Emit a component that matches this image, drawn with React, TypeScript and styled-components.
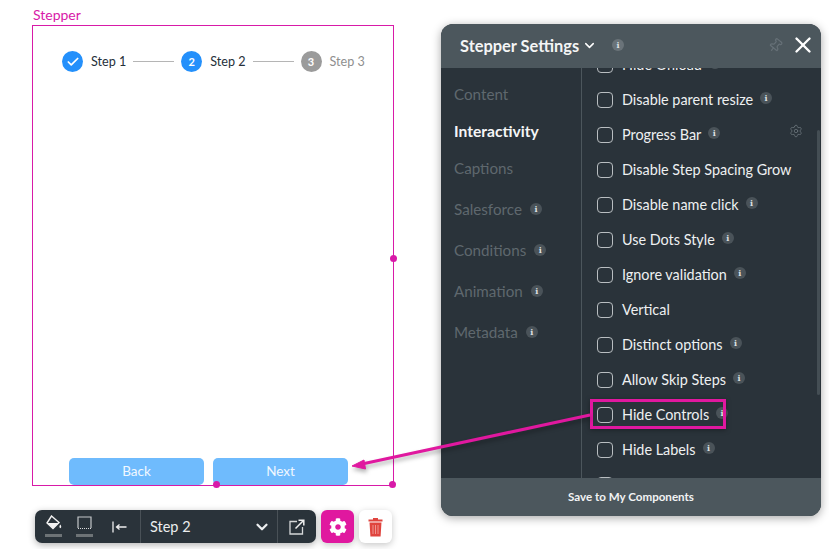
import React from "react";
import styled, { createGlobalStyle } from "styled-components";
import { Check, ChevronDown, X, Settings, Pin } from "lucide-react";
import { FaCog } from "react-icons/fa";

const Global = createGlobalStyle`
  html, body { margin: 0; padding: 0; background: #fff; }
  body { font-family: Lato, "Liberation Sans", sans-serif; }
`;

const Page = styled.div`
  position: relative;
  width: 829px;
  height: 549px;
  overflow: hidden;
  display: flex;
  background: #fff;
`;

const Stage = styled.div`
  width: 441px;
  flex: none;
  padding: 7px 0 0 32px;
  box-sizing: border-box;
  display: flex;
  flex-direction: column;
`;

const FrameLabel = styled.div`
  font-size: 14px;
  line-height: 16px;
  height: 18px;
  margin-left: 1px;
  color: #d81aa8;
`;

const Frame = styled.div`
  position: relative;
  width: 362px;
  height: 461px;
  box-sizing: border-box;
  border: 1px solid #d81aa8;
  display: flex;
  flex-direction: column;
  justify-content: space-between;
`;

const Steps = styled.div`
  display: flex;
  align-items: center;
  padding: 25px 0 0 29px;
`;

const Circle = styled.div<{ $c: string }>`
  width: 21px;
  height: 21px;
  flex: none;
  border-radius: 50%;
  background: ${(p) => p.$c};
  color: #fff;
  display: flex;
  align-items: center;
  justify-content: center;
  font-size: 11px;
  font-weight: 700;
`;

const StepName = styled.span<{ $muted?: boolean }>`
  margin-left: 8px;
  font-size: 12.6px;
  line-height: 21px;
  color: ${(p) => (p.$muted ? "#8f8f8f" : "#26303a")};
`;

const StepLine = styled.div<{ $w: number }>`
  width: ${(p) => p.$w}px;
  height: 1px;
  margin: 0 7px;
  background: #b5b5b5;
`;

const Buttons = styled.div`
  display: flex;
  gap: 9px;
  padding-left: 36px;
`;

const Btn = styled.div`
  width: 135px;
  height: 27px;
  border-radius: 5px;
  background: #6fbbfd;
  color: #f1f8ff;
  font-size: 13.5px;
  line-height: 27px;
  text-align: center;
`;

const Handle = styled.span<{ $x: number; $y: number }>`
  position: absolute;
  left: ${(p) => p.$x}px;
  top: ${(p) => p.$y}px;
  width: 7px;
  height: 7px;
  border-radius: 50%;
  background: #d81aa8;
`;

const ToolRow = styled.div`
  display: flex;
  align-items: center;
  margin: 24px 0 0 3px;
`;

const Toolbar = styled.div`
  width: 281px;
  height: 33px;
  border-radius: 7px;
  background: #2a333a;
  display: flex;
  align-items: stretch;
  box-shadow: 0 2px 7px rgba(0, 0, 0, 0.3);
  color: #f2f2f2;
`;

const ToolIcons = styled.div`
  width: 105px;
  flex: none;
  display: flex;
  align-items: center;
  padding-left: 9px;
  box-sizing: border-box;
  gap: 12px;
`;

const ToolIcon = styled.div<{ $shift?: number }>`
  width: 19px;
  height: 33px;
  margin-left: ${(p) => p.$shift ?? 0}px;
  display: flex;
  flex-direction: column;
  align-items: center;
  justify-content: center;
  position: relative;
`;

const Swatch = styled.span`
  position: absolute;
  left: 1px;
  bottom: 6px;
  width: 17px;
  height: 3px;
  background: #6d7376;
`;

const ToolSelect = styled.div`
  flex: 1;
  border-left: 1px solid #495157;
  border-right: 1px solid #495157;
  display: flex;
  align-items: center;
  justify-content: space-between;
  padding: 0 6px 0 9px;
  font-size: 14.5px;
  color: #eceeef;
`;

const ToolEnd = styled.div`
  width: 38px;
  flex: none;
  display: flex;
  align-items: center;
  justify-content: center;
`;

const SquareBtn = styled.div<{ $bg: string; $c: string }>`
  width: 33px;
  height: 33px;
  margin-left: 5px;
  border-radius: 6px;
  background: ${(p) => p.$bg};
  color: ${(p) => p.$c};
  display: flex;
  align-items: center;
  justify-content: center;
  box-shadow: 0 2px 7px rgba(0, 0, 0, 0.22);
`;

const Panel = styled.div`
  margin-top: 24px;
  width: 380px;
  height: 492px;
  border-radius: 12px;
  background: #2a333a;
  box-shadow: 0 2px 10px rgba(0, 0, 0, 0.35);
  display: flex;
  flex-direction: column;
  overflow: hidden;
  flex: none;
`;

const Header = styled.div`
  height: 44px;
  flex: none;
  background: #4c575d;
  display: flex;
  align-items: center;
  padding: 0 5px 2px 19px;
  box-sizing: border-box;
  color: #fff;
`;

const Title = styled.span`
  font-size: 16.4px;
  font-weight: 700;
  color: #f4f5f5;
`;

const HeaderSpacer = styled.div`
  flex: 1;
`;

const Info = styled.span<{ $dim?: boolean }>`
  display: inline-flex;
  align-items: center;
  justify-content: center;
  width: 12px;
  height: 12px;
  flex: none;
  border-radius: 50%;
  background: ${(p) => (p.$dim ? "#4a5359" : "#6a7379")};
  color: #dfe2e4;
  font-family: "DejaVu Serif", serif;
  font-size: 8px;
  font-weight: 700;
  line-height: 12px;
`;

const Body = styled.div`
  flex: 1;
  display: flex;
  min-height: 0;
  position: relative;
`;

const Nav = styled.div`
  width: 141px;
  flex: none;
  box-sizing: border-box;
  border-right: 1px solid #4c565c;
  padding: 7px 0 0 13px;
  display: flex;
  flex-direction: column;
`;

const NavGroup = styled.div<{ $h: number; $top?: number }>`
  margin-top: ${(p) => p.$top ?? 0}px;
  display: grid;
  grid-auto-rows: ${(p) => p.$h}px;
`;

const NavItem = styled.div<{ $active?: boolean }>`
  display: flex;
  align-items: center;
  gap: 8px;
  font-size: ${(p) => (p.$active ? 15.6 : 15.2)}px;
  font-weight: ${(p) => (p.$active ? 700 : 400)};
  color: ${(p) => (p.$active ? "#f5f6f6" : "#5f686e")};
`;

const List = styled.div`
  flex: 1;
  overflow: hidden;
`;

const ListInner = styled.div`
  margin-top: -21px;
  padding-left: 15px;
`;

const Row = styled.div<{ $mark?: boolean }>`
  position: relative;
  height: 35px;
  display: flex;
  align-items: center;
  color: #eef0f1;
  font-size: 14.4px;
  ${(p) =>
    p.$mark &&
    `&::after {
      content: "";
      position: absolute;
      left: -7px;
      top: 2px;
      width: 136px;
      height: 30px;
      box-sizing: border-box;
      border: 3px solid #e0189f;
      box-shadow: 0 1px 5px rgba(0, 0, 0, 0.35);
    }`}
`;

const Box = styled.span`
  width: 14px;
  height: 14px;
  flex: none;
  border: 1px solid #b9bec1;
  border-radius: 4px;
  margin-right: 9px;
`;

const RowInfo = styled(Info)`
  margin: -3px 0 0 7px;
`;

const Gear = styled.span`
  position: absolute;
  left: 192px;
  top: 7px;
  color: #6b747a;
  display: flex;
`;

const Scrollbar = styled.span`
  position: absolute;
  right: 1px;
  top: 62px;
  width: 3px;
  height: 265px;
  background: #444e54;
  border-radius: 2px;
`;

const Footer = styled.div`
  height: 38px;
  flex: none;
  background: #4c575d;
  color: #f2f3f4;
  font-size: 11.6px;
  font-weight: 700;
  text-align: center;
  line-height: 38px;
`;

const Arrow = styled.svg`
  position: absolute;
  left: 0;
  top: 0;
  pointer-events: none;
  filter: drop-shadow(1px 3px 2px rgba(0, 0, 0, 0.3));
`;

const rows: { t: string; i?: boolean; gear?: boolean; mark?: boolean }[] = [
  { t: "Hide Onload", i: true },
  { t: "Disable parent resize", i: true },
  { t: "Progress Bar", i: true, gear: true },
  { t: "Disable Step Spacing Grow" },
  { t: "Disable name click", i: true },
  { t: "Use Dots Style", i: true },
  { t: "Ignore validation", i: true },
  { t: "Vertical" },
  { t: "Distinct options", i: true },
  { t: "Allow Skip Steps", i: true },
  { t: "Hide Controls", i: true, mark: true },
  { t: "Hide Labels", i: true },
  { t: "" },
];

export default function App() {
  return (
    <Page>
      <Global />
      <Stage>
        <FrameLabel>Stepper</FrameLabel>
        <Frame>
          <Steps>
            <Circle $c="#2490fb">
              <Check size={14} strokeWidth={3} />
            </Circle>
            <StepName>Step 1</StepName>
            <StepLine $w={41} />
            <Circle $c="#2490fb">2</Circle>
            <StepName>Step 2</StepName>
            <StepLine $w={41} />
            <Circle $c="#9b9b9b">3</Circle>
            <StepName $muted>Step 3</StepName>
          </Steps>
          <Buttons>
            <Btn>Back</Btn>
            <Btn>Next</Btn>
          </Buttons>
          <Handle $x={357} $y={229} />
          <Handle $x={180} $y={455} />
          <Handle $x={356} $y={455} />
        </Frame>
        <ToolRow>
          <Toolbar>
            <ToolIcons>
              <ToolIcon>
                <svg width="16" height="16" viewBox="0 0 16 16" style={{ marginTop: -7 }}>
                  <path d="M5.5 1 L13 7.5 L7 13.5 L1 8 Z" fill="none" stroke="#f2f2f2" strokeWidth="1.4" />
                  <path d="M1.5 8 H12.5 L7 13.5 Z" fill="#f2f2f2" />
                  <path d="M14.3 9.5 C15.3 11 15.8 12.5 14.3 13.3 C12.9 12.5 13.3 11 14.3 9.5 Z" fill="#f2f2f2" />
                </svg>
                <Swatch />
              </ToolIcon>
              <ToolIcon>
                <svg width="15" height="14" viewBox="0 0 15 14" style={{ marginTop: -7 }}>
                  <path d="M1 12 V1 H14 V12" fill="none" stroke="#c4c7c9" strokeWidth="1.2" />
                  <path d="M1 12.5 H14" stroke="#d8dadb" strokeWidth="1" strokeDasharray="1 1" />
                </svg>
                <Swatch />
              </ToolIcon>
              <ToolIcon $shift={4}>
                <svg width="15" height="12" viewBox="0 0 15 12">
                  <path d="M1 0.5 V11.5 M14.5 6 H4.5 M7.5 3.5 L4.5 6 L7.5 8.5" fill="none" stroke="#eee" strokeWidth="1.3" />
                </svg>
              </ToolIcon>
            </ToolIcons>
            <ToolSelect>
              Step 2
              <ChevronDown size={18} strokeWidth={3} />
            </ToolSelect>
            <ToolEnd>
              <svg width="16" height="16" viewBox="0 0 16 16">
                <path d="M8 2.5 H1 V15 H13.5 V8" fill="none" stroke="#d5d7d8" strokeWidth="1.3" />
                <path d="M6.5 9.5 L14 2 M9.5 1.2 H14.8 V6.5" fill="none" stroke="#eee" strokeWidth="1.5" />
              </svg>
            </ToolEnd>
          </Toolbar>
          <SquareBtn $bg="#e0189f" $c="#fff">
            <FaCog size={18} />
          </SquareBtn>
          <SquareBtn $bg="#fff" $c="#e0443e">
            <svg width="15" height="20" viewBox="0 0 15 20">
              <path d="M5 1 H10 V2.5 H14.5 V4.5 H0.5 V2.5 H5 Z" fill="currentColor" />
              <path d="M1.5 5.5 H13.5 L12.6 19.5 H2.4 Z" fill="currentColor" />
              <path d="M5 8 V17 M7.5 8 V17 M10 8 V17" stroke="#f3a9a5" strokeWidth="0.8" />
            </svg>
          </SquareBtn>
        </ToolRow>
      </Stage>
      <Panel>
        <Header>
          <Title>Stepper Settings</Title>
          <ChevronDown size={15} strokeWidth={2.4} style={{ marginLeft: 3 }} />
          <Info style={{ marginLeft: 15 }}>i</Info>
          <HeaderSpacer />
          <Pin size={15} color="#667077" style={{ transform: "rotate(40deg)", marginRight: 7 }} />
          <X size={26} strokeWidth={2.2} />
        </Header>
        <Body>
          <Nav>
            <NavGroup $h={37}>
              <NavItem>Content</NavItem>
              <NavItem $active>Interactivity</NavItem>
              <NavItem>Captions</NavItem>
            </NavGroup>
            <NavGroup $h={41} $top={2}>
              {["Salesforce", "Conditions", "Animation", "Metadata"].map((t) => (
                <NavItem key={t}>
                  {t}
                  <Info $dim>i</Info>
                </NavItem>
              ))}
            </NavGroup>
          </Nav>
          <List>
            <ListInner>
              {rows.map((r, n) => (
                <Row key={n} $mark={r.mark}>
                  <Box />
                  {r.t}
                  {r.i && <RowInfo $dim>i</RowInfo>}
                  {r.gear && (
                    <Gear>
                      <Settings size={14} strokeWidth={1.4} />
                    </Gear>
                  )}
                </Row>
              ))}
            </ListInner>
          </List>
          <Scrollbar />
        </Body>
        <Footer>Save to My Components</Footer>
      </Panel>
      <Arrow width="829" height="549" viewBox="0 0 829 549">
        <path d="M590 415 L362 464" stroke="#e0189f" strokeWidth="3" fill="none" />
        <path d="M352 466 L364 460 L365.5 469 Z" fill="#e0189f" stroke="#e0189f" strokeWidth="1" />
      </Arrow>
    </Page>
  );
}
